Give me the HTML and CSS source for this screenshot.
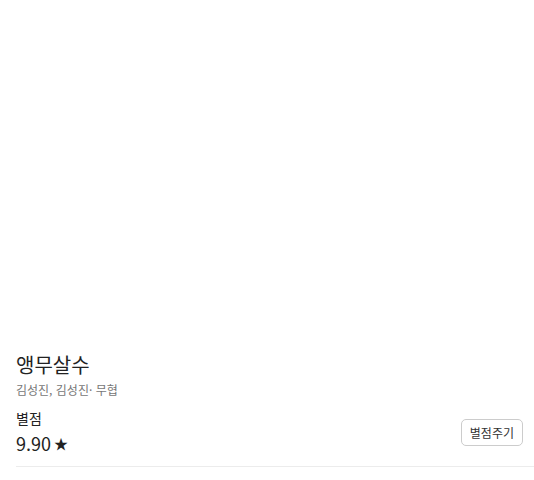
FILE: index.html
```html
<!DOCTYPE html>
<html lang="ko">
<head>
    <meta charset="UTF-8">
    <meta name="viewport" content="width=device-width, initial-scale=1.0">
    <title>앵무살수</title>
    <link rel="stylesheet" href="styles.css">
</head>
<body>
    <!-- 표지 영역 (비어 있음) -->
    <div class="cover"></div>

    <div class="info">
        <h1 class="title">앵무살수</h1>
        <p class="authors">김성진, 김성진· 무협</p>

        <div class="rating-row">
            <div class="rating">
                <div class="rating-label">별점</div>
                <div class="rating-value">9.90<span class="star">★</span></div>
            </div>
            <button class="rate-button">별점주기</button>
        </div>
    </div>
</body>
</html>
```

FILE: styles.css
```css
body {
    margin: 0;
    font-family: "Noto Sans CJK KR", "Noto Sans", sans-serif;
    color: #222;
    background-color: #fff;
}
.cover {
    height: 351px;
}
.info {
    margin-left: 16px;
    border-bottom: 1px solid #ececec;
    padding-bottom: 9px;
}
.title {
    font-size: 20px;
    font-weight: normal;
    margin: 0;
    line-height: 28px;
}
.authors {
    font-size: 12px;
    color: #777;
    margin: 2px 0 0;
    line-height: 18px;
}
.rating-row {
    display: flex;
    justify-content: space-between;
    align-items: center;
    margin-top: 9px;
    padding-right: 11px;
}
.rating-label {
    font-size: 14px;
    line-height: 20px;
}
.rating-value {
    font-size: 18px;
    line-height: 24px;
    margin-top: 3px;
}
.star {
    font-size: 14px;
    margin-left: 3px;
    position: relative;
    top: -2px;
}
.rate-button {
    font-family: inherit;
    font-size: 12px;
    color: #333;
    background-color: #fff;
    border: 1px solid #ccc;
    border-radius: 5px;
    padding: 0 8px;
    height: 27px;
    cursor: pointer;
}
```
